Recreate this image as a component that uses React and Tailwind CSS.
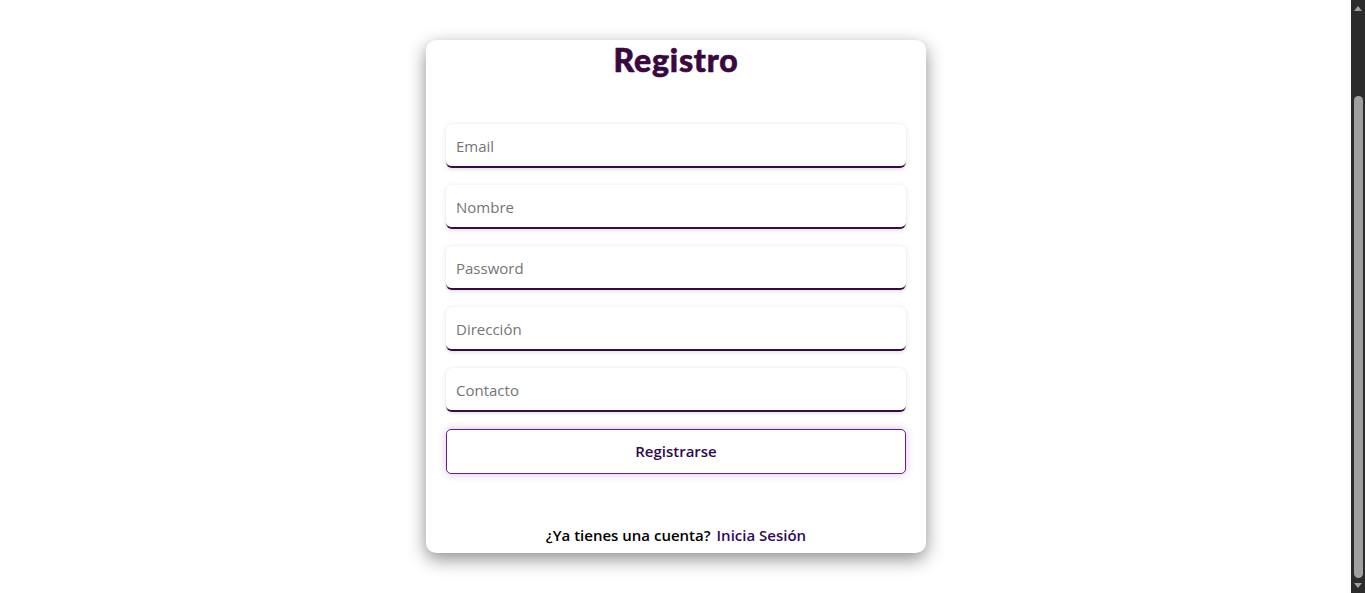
import React from "react";

const fields = ["Email", "Nombre", "Password", "Dirección", "Contacto"];

export default function App() {
  return (
    <div className="flex h-[593px] w-full bg-white overflow-hidden" style={{ fontFamily: '"Open Sans", "Noto Sans", sans-serif' }}>
      <div className="flex-1 flex justify-center pt-[40px] pl-[1px]">
        <div className="w-[500px] h-[513px] bg-white rounded-[10px] shadow-[0_6px_18px_rgba(0,0,0,0.45)] flex flex-col px-[20px]">
          <h1 className="text-center text-[32px] leading-[40px] font-black text-[#38083f] tracking-[0.8px]" style={{ fontFamily: 'Lato, "Open Sans", sans-serif', WebkitTextStroke: '0.6px #38083f' }}>
            Registro
          </h1>
          <div className="flex flex-col gap-[17px] mt-[44px]">
            {fields.map((f) => (
              <input
                key={f}
                placeholder={f}
                className="h-[44px] w-full rounded-[6px] bg-white border-b-2 border-[#3a0a45] px-[10px] pt-[2px] text-[15px] text-[#333] placeholder:text-[#757575] shadow-[0_1px_4px_rgba(0,0,0,0.15)] outline-none"
              />
            ))}
            <button className="h-[45px] w-full rounded-[5px] border border-[#6a1b9a] bg-white text-[15px] font-semibold text-[#2d0a50] shadow-[0_0_8px_rgba(106,27,154,0.25)]">
              Registrarse
            </button>
          </div>
          <div className="mt-auto pb-[7px] text-center text-[15px] leading-[22px]">
            <span className="font-semibold text-black">¿Ya tienes una cuenta?</span>
            <span className="ml-[6px] font-semibold text-[#2e0a5e]">Inicia Sesión</span>
          </div>
        </div>
      </div>
      <div className="w-[14px] h-full bg-[#2b2b2b] flex flex-col items-center">
        <div className="h-[17px] flex items-center justify-center">
          <div className="w-0 h-0 border-l-[4px] border-r-[4px] border-b-[5px] border-l-transparent border-r-transparent border-b-[#a0a0a0]" />
        </div>
        <div className="mt-[79px] w-[9px] h-[482px] rounded-[5px] bg-[#a0a0a0]" />
        <div className="mt-auto h-[15px] flex items-center justify-center">
          <div className="w-0 h-0 border-l-[4px] border-r-[4px] border-t-[5px] border-l-transparent border-r-transparent border-t-[#a0a0a0]" />
        </div>
      </div>
    </div>
  );
}
